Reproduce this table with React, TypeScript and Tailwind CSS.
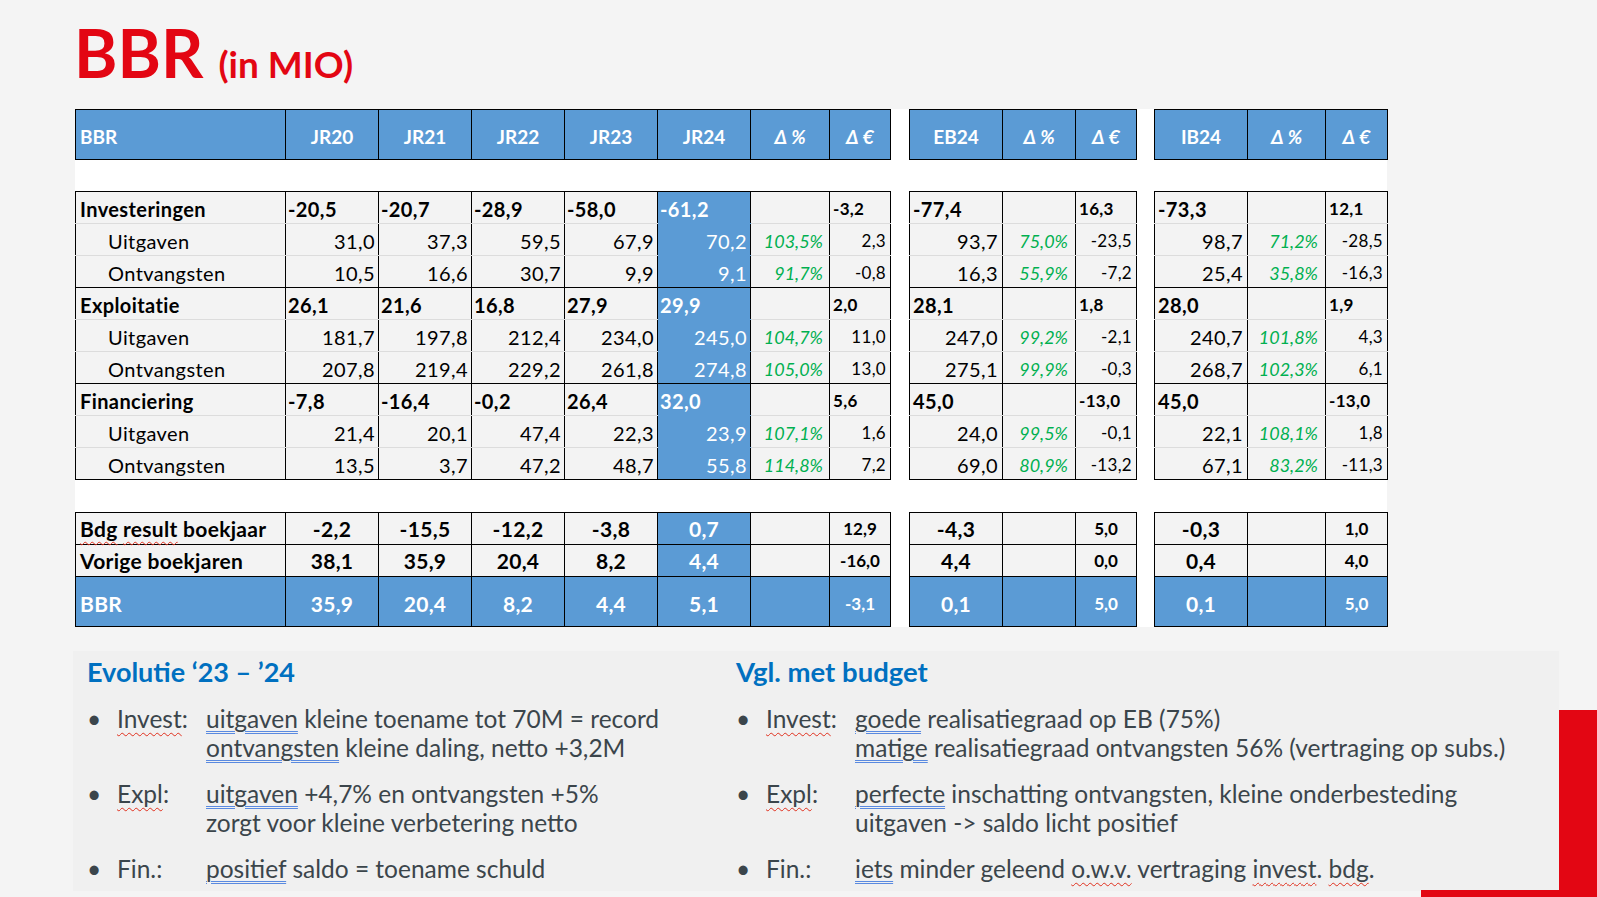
import React from 'react';

type BodyRow = {
  label: string;
  group: boolean;
  jr: string[];
  pct: string;
  eur: string;
  eb: [string, string, string];
  ib: [string, string, string];
};

const body: BodyRow[] = [
  { label: 'Investeringen', group: true, jr: ['-20,5', '-20,7', '-28,9', '-58,0', '-61,2'], pct: '', eur: '-3,2', eb: ['-77,4', '', '16,3'], ib: ['-73,3', '', '12,1'] },
  { label: 'Uitgaven', group: false, jr: ['31,0', '37,3', '59,5', '67,9', '70,2'], pct: '103,5%', eur: '2,3', eb: ['93,7', '75,0%', '-23,5'], ib: ['98,7', '71,2%', '-28,5'] },
  { label: 'Ontvangsten', group: false, jr: ['10,5', '16,6', '30,7', '9,9', '9,1'], pct: '91,7%', eur: '-0,8', eb: ['16,3', '55,9%', '-7,2'], ib: ['25,4', '35,8%', '-16,3'] },
  { label: 'Exploitatie', group: true, jr: ['26,1', '21,6', '16,8', '27,9', '29,9'], pct: '', eur: '2,0', eb: ['28,1', '', '1,8'], ib: ['28,0', '', '1,9'] },
  { label: 'Uitgaven', group: false, jr: ['181,7', '197,8', '212,4', '234,0', '245,0'], pct: '104,7%', eur: '11,0', eb: ['247,0', '99,2%', '-2,1'], ib: ['240,7', '101,8%', '4,3'] },
  { label: 'Ontvangsten', group: false, jr: ['207,8', '219,4', '229,2', '261,8', '274,8'], pct: '105,0%', eur: '13,0', eb: ['275,1', '99,9%', '-0,3'], ib: ['268,7', '102,3%', '6,1'] },
  { label: 'Financiering', group: true, jr: ['-7,8', '-16,4', '-0,2', '26,4', '32,0'], pct: '', eur: '5,6', eb: ['45,0', '', '-13,0'], ib: ['45,0', '', '-13,0'] },
  { label: 'Uitgaven', group: false, jr: ['21,4', '20,1', '47,4', '22,3', '23,9'], pct: '107,1%', eur: '1,6', eb: ['24,0', '99,5%', '-0,1'], ib: ['22,1', '108,1%', '1,8'] },
  { label: 'Ontvangsten', group: false, jr: ['13,5', '3,7', '47,2', '48,7', '55,8'], pct: '114,8%', eur: '7,2', eb: ['69,0', '80,9%', '-13,2'], ib: ['67,1', '83,2%', '-11,3'] },
];

type LowerRow = {
  label: string;
  jr: string[];
  eur: string;
  eb: [string, string];
  ib: [string, string];
  total: boolean;
};

const lower: LowerRow[] = [
  { label: 'Bdg result boekjaar', jr: ['-2,2', '-15,5', '-12,2', '-3,8', '0,7'], eur: '12,9', eb: ['-4,3', '5,0'], ib: ['-0,3', '1,0'], total: false },
  { label: 'Vorige boekjaren', jr: ['38,1', '35,9', '20,4', '8,2', '4,4'], eur: '-16,0', eb: ['4,4', '0,0'], ib: ['0,4', '4,0'], total: false },
  { label: 'BBR', jr: ['35,9', '20,4', '8,2', '4,4', '5,1'], eur: '-3,1', eb: ['0,1', '5,0'], ib: ['0,1', '5,0'], total: true },
];

const blueBg = 'bg-[#5b9bd5] text-white';
const greyBg = 'bg-[#f3f3f3] text-black';

const bodyBorder = (r: number, blue: boolean) => {
  const parts = ['border-l border-r border-l-black border-r-black border-b'];
  const end = r % 3 === 2;
  parts.push(end ? 'border-b-black' : blue ? 'border-b-[#5b9bd5]' : 'border-b-[#dcdcdc]');
  if (r === 0) parts.push('border-t border-t-black');
  return parts.join(' ');
};

const wavy = 'underline decoration-wavy decoration-[#e0301e] decoration-1 underline-offset-[4px]';
const dbl = 'underline decoration-double decoration-[#5a8ae0] decoration-1 underline-offset-[3px]';

function Head({ children, left, delta }: { children: React.ReactNode; left?: boolean; delta?: boolean }) {
  return (
    <td className="p-0 h-[50px] align-bottom border border-black bg-[#5b9bd5] text-white font-bold">
      <div
        className={`pb-[10px] leading-[24px] whitespace-nowrap ${left ? 'text-left pl-[4px] text-[19px]' : 'text-center text-[19px]'} ${delta ? 'italic text-[18px]' : ''}`}
      >
        {children}
      </div>
    </td>
  );
}

function Spacer({ span, h }: { span: number; h: 'a' | 'b' }) {
  return (
    <tr className={h === 'a' ? 'h-[32px]' : 'h-[33px]'}>
      <td colSpan={span} className="p-0" />
    </tr>
  );
}

function LowerLabel({ label }: { label: string }) {
  if (label === 'Bdg result boekjaar') {
    return (
      <>
        <span className={wavy}>Bdg</span> <span className={wavy}>result</span> boekjaar
      </>
    );
  }
  return <>{label}</>;
}

function JRTable() {
  return (
    <table className="table-fixed border-collapse w-[815px]">
      <colgroup>
        <col className="w-[210px]" />
        <col className="w-[93px]" />
        <col className="w-[93px]" />
        <col className="w-[93px]" />
        <col className="w-[93px]" />
        <col className="w-[93px]" />
        <col className="w-[79px]" />
        <col className="w-[61px]" />
      </colgroup>
      <tbody>
        <tr className="h-[50px]">
          <Head left>BBR</Head>
          <Head>JR20</Head>
          <Head>JR21</Head>
          <Head>JR22</Head>
          <Head>JR23</Head>
          <Head>JR24</Head>
          <Head delta>Δ %</Head>
          <Head delta>Δ €</Head>
        </tr>
        <Spacer span={8} h="a" />
        {body.map((row, r) => (
          <tr key={r} className="h-[32px]">
            <td className={`p-0 align-bottom ${greyBg} ${bodyBorder(r, false)}`}>
              <div className={`pb-[2px] leading-[24px] text-[20px] tracking-[0.4px] whitespace-nowrap ${row.group ? 'pl-[4px] font-bold' : 'pl-[32px]'}`}>
                {row.label}
              </div>
            </td>
            {row.jr.map((v, i) => {
              const blue = i === 4;
              return (
                <td key={i} className={`p-0 align-bottom ${blue ? blueBg : greyBg} ${bodyBorder(r, blue)}`}>
                  <div className={`pb-[2px] leading-[24px] text-[20px] tracking-[0.4px] whitespace-nowrap ${row.group ? 'pl-[2px] text-left font-bold' : 'pr-[3px] text-right'}`}>
                    {v}
                  </div>
                </td>
              );
            })}
            <td className={`p-0 align-bottom ${greyBg} ${bodyBorder(r, false)}`}>
              <div className="pb-[2px] leading-[24px] text-[18px] italic text-[#00b050] text-right pr-[6px] whitespace-nowrap">{row.pct}</div>
            </td>
            <td className={`p-0 align-bottom ${greyBg} ${bodyBorder(r, false)}`}>
              <div className={`pb-[2px] leading-[24px] text-[17px] tracking-[0.3px] whitespace-nowrap ${row.group ? 'font-bold text-left pl-[3px]' : 'text-right pr-[4px]'}`}>
                {row.eur}
              </div>
            </td>
          </tr>
        ))}
        <Spacer span={8} h="b" />
        {lower.map((row, r) => (
          <tr key={r} className={row.total ? 'h-[50px]' : 'h-[32px]'}>
            <td className={`p-0 align-bottom border border-black ${row.total ? blueBg : greyBg}`}>
              <div className={`leading-[24px] text-[21px] font-bold tracking-[0.3px] pl-[4px] whitespace-nowrap ${row.total ? 'pb-[10px]' : 'pb-[3px]'}`}>
                <LowerLabel label={row.label} />
              </div>
            </td>
            {row.jr.map((v, i) => {
              const blue = row.total || i === 4;
              return (
                <td key={i} className={`p-0 align-bottom border border-black ${blue ? blueBg : greyBg}`}>
                  <div className={`leading-[24px] text-[21px] font-bold tracking-[0.3px] text-center ${row.total ? 'pb-[10px]' : 'pb-[3px]'}`}>{v}</div>
                </td>
              );
            })}
            <td className={`p-0 align-bottom border border-black ${row.total ? blueBg : greyBg}`} />
            <td className={`p-0 align-bottom border border-black ${row.total ? blueBg : greyBg}`}>
              <div className={`leading-[24px] text-[17px] font-bold text-center ${row.total ? 'pb-[10px]' : 'pb-[3px]'}`}>{row.eur}</div>
            </td>
          </tr>
        ))}
      </tbody>
    </table>
  );
}

function SideTable({ kind }: { kind: 'eb' | 'ib' }) {
  const isEb = kind === 'eb';
  return (
    <table className={`table-fixed border-collapse ${isEb ? 'w-[227px]' : 'w-[233px]'}`}>
      {isEb ? (
        <colgroup>
          <col className="w-[93px]" />
          <col className="w-[73px]" />
          <col className="w-[61px]" />
        </colgroup>
      ) : (
        <colgroup>
          <col className="w-[93px]" />
          <col className="w-[78px]" />
          <col className="w-[62px]" />
        </colgroup>
      )}
      <tbody>
        <tr className="h-[50px]">
          <Head>{isEb ? 'EB24' : 'IB24'}</Head>
          <Head delta>Δ %</Head>
          <Head delta>Δ €</Head>
        </tr>
        <Spacer span={3} h="a" />
        {body.map((row, r) => {
          const d = isEb ? row.eb : row.ib;
          return (
            <tr key={r} className="h-[32px]">
              <td className={`p-0 align-bottom ${greyBg} ${bodyBorder(r, false)}`}>
                <div className={`pb-[2px] leading-[24px] text-[20px] tracking-[0.4px] whitespace-nowrap ${row.group ? 'pl-[3px] text-left font-bold' : 'pr-[4px] text-right'}`}>
                  {d[0]}
                </div>
              </td>
              <td className={`p-0 align-bottom ${greyBg} ${bodyBorder(r, false)}`}>
                <div className="pb-[2px] leading-[24px] text-[18px] italic text-[#00b050] text-right pr-[7px] whitespace-nowrap">{d[1]}</div>
              </td>
              <td className={`p-0 align-bottom ${greyBg} ${bodyBorder(r, false)}`}>
                <div className={`pb-[2px] leading-[24px] text-[17px] tracking-[0.3px] whitespace-nowrap ${row.group ? 'font-bold text-left pl-[3px]' : 'text-right pr-[4px]'}`}>
                  {d[2]}
                </div>
              </td>
            </tr>
          );
        })}
        <Spacer span={3} h="b" />
        {lower.map((row, r) => {
          const d = isEb ? row.eb : row.ib;
          const bg = row.total ? blueBg : greyBg;
          return (
            <tr key={r} className={row.total ? 'h-[50px]' : 'h-[32px]'}>
              <td className={`p-0 align-bottom border border-black ${bg}`}>
                <div className={`leading-[24px] text-[21px] font-bold tracking-[0.3px] text-center ${row.total ? 'pb-[10px]' : 'pb-[3px]'}`}>{d[0]}</div>
              </td>
              <td className={`p-0 align-bottom border border-black ${bg}`} />
              <td className={`p-0 align-bottom border border-black ${bg}`}>
                <div className={`leading-[24px] text-[17px] font-bold text-center ${row.total ? 'pb-[10px]' : 'pb-[3px]'}`}>{d[1]}</div>
              </td>
            </tr>
          );
        })}
      </tbody>
    </table>
  );
}

function Item({ label, lines }: { label: React.ReactNode; lines: React.ReactNode[] }) {
  return (
    <div className="flex text-[24.5px] leading-[29px] text-[#3b454b] mt-[17px]">
      <div className="w-[30px] shrink-0">•</div>
      <div className="w-[89px] shrink-0 whitespace-nowrap">{label}</div>
      <div className="whitespace-nowrap">
        {lines.map((l, i) => (
          <div key={i}>{l}</div>
        ))}
      </div>
    </div>
  );
}

export default function App() {
  return (
    <div className="relative w-[1597px] h-[897px] overflow-hidden bg-[#f4f4f4] font-['Lato','Open_Sans','DejaVu_Sans',sans-serif]">
      <div className="flex items-baseline pl-[74px] pt-[20px] leading-none text-[#e30613] font-bold">
        <span className="text-[66px]">BBR</span>
        <span className="ml-[15px] text-[37px]">(in MIO)</span>
      </div>

      <div className="ml-[75px] mt-[23px] flex w-[1312px] bg-white">
        <JRTable />
        <div className="ml-[18px]">
          <SideTable kind="eb" />
        </div>
        <div className="ml-[17px]">
          <SideTable kind="ib" />
        </div>
      </div>

      <div className="ml-[73px] mt-[24px] w-[1486px] h-[240px] bg-[#f0f0f0] grid grid-cols-[649px_1fr] pt-[6px] pl-[14px]">
        <div>
          <div className="text-[#0070c0] font-bold text-[27px] leading-[30px] whitespace-nowrap">Evolutie ‘23 – ’24</div>
          <Item
            label={<><span className={wavy}>Invest</span>:</>}
            lines={[
              <><span className={dbl}>uitgaven</span> kleine toename tot 70M = record</>,
              <><span className={dbl}>ontvangsten</span> kleine daling, netto +3,2M</>,
            ]}
          />
          <Item
            label={<><span className={wavy}>Expl</span>:</>}
            lines={[
              <><span className={dbl}>uitgaven</span> +4,7% en ontvangsten +5%</>,
              <>zorgt voor kleine verbetering netto</>,
            ]}
          />
          <Item label={<>Fin.:</>} lines={[<><span className={dbl}>positief</span> saldo = toename schuld</>]} />
        </div>
        <div>
          <div className="text-[#0070c0] font-bold text-[27.5px] leading-[30px] whitespace-nowrap">Vgl. met budget</div>
          <Item
            label={<><span className={wavy}>Invest</span>:</>}
            lines={[
              <><span className={dbl}>goede</span> realisatiegraad op EB (75%)</>,
              <><span className={dbl}>matige</span> realisatiegraad ontvangsten 56% (vertraging op subs.)</>,
            ]}
          />
          <Item
            label={<><span className={wavy}>Expl</span>:</>}
            lines={[
              <><span className={dbl}>perfecte</span> inschatting ontvangsten, kleine onderbesteding</>,
              <>uitgaven -&gt; saldo licht positief</>,
            ]}
          />
          <Item
            label={<>Fin.:</>}
            lines={[
              <>
                <span className={dbl}>iets</span> minder geleend <span className={wavy}>o.w.v.</span> vertraging{' '}
                <span className={wavy}>invest</span>. <span className={wavy}>bdg</span>.
              </>,
            ]}
          />
        </div>
      </div>

      <div className="absolute left-[1559px] top-[710px] w-[38px] h-[187px] bg-[#e30613]" />
      <div className="absolute left-[1421px] top-[890px] w-[176px] h-[7px] bg-[#e30613]" />
    </div>
  );
}
